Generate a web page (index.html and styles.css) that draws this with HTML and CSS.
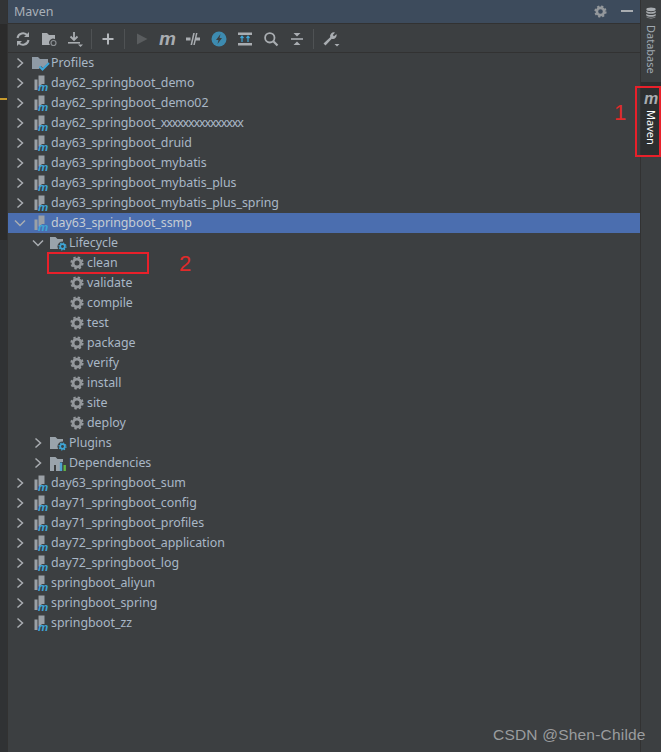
FILE: index.html
```html
<!DOCTYPE html>
<html lang="en">
<head>
<meta charset="utf-8">
<title>Maven</title>
<link rel="stylesheet" href="styles.css">
</head>
<body>
<svg class="defs" width="0" height="0">
  <defs>
    <symbol id="chev" viewBox="0 0 10 12"><path d="M2.500 1.500 7.500 6l-5 4.500" fill="none" stroke="#a9adb1" stroke-width="1.500"/></symbol>
    <symbol id="down" viewBox="0 0 12 10"><path d="M1 2.500 6 7.500l5-5" fill="none" stroke="#a9adb1" stroke-width="1.500"/></symbol>
    <symbol id="mod" viewBox="0 0 16 16">
      <path d="M5.500 .5h6v8.500H8.500v2.500h-3zM1.500 4.500h3v10.500h-3z" fill="#9aa0a6"/>
      <text x="5" y="15.800" class="mod-m">m</text>
    </symbol>
    <symbol id="gear" viewBox="0 0 14 14">
      <circle cx="7" cy="7" r="3.900" fill="none" stroke="#94989c" stroke-width="2.800"/>
      <circle cx="7" cy="7" r="5.700" fill="none" stroke="#94989c" stroke-width="1.800" stroke-dasharray="2.400 2.080"/>
    </symbol>
    <symbol id="badge" viewBox="0 0 18 15">
      <path d="M0 1h5.500l2 2H13v10H0z" fill="#9aa3ab"/>
      <circle cx="12.500" cy="10.500" r="5" fill="#3c3f41"/>
      <circle cx="12.500" cy="10.500" r="2.300" fill="none" stroke="#3ea6d8" stroke-width="1.700"/>
      <circle cx="12.500" cy="10.500" r="3.500" fill="none" stroke="#3ea6d8" stroke-width="1.200" stroke-dasharray="1.300 1.450"/>
    </symbol>
  </defs>
</svg>
<div class="ide">
  <div class="gutter"><span class="gutter-mark"></span></div>
  <main class="panel">
    <header class="title-bar">
      <span class="title">Maven</span>
      <div class="title-actions">
        <svg class="ico" width="13" height="13"><use href="#gear"/></svg>
        <span class="minimize"></span>
      </div>
    </header>
    <div class="toolbar">
      <svg class="tool" width="16" height="16" viewBox="0 0 16 16"><path d="M2.500 7a5.600 5.600 0 0 1 10-2.500M13.500 9a5.600 5.600 0 0 1-10 2.500" fill="none" stroke="#a9adb1" stroke-width="2"/><path d="M14 1v5H9zM2 15v-5h5z" fill="#a9adb1"/></svg>
      <svg class="tool" width="16" height="16" viewBox="0 0 16 16"><path d="M1 2h5l2 2h6v4a4 4 0 0 0-5 6H1z" fill="#a9adb1"/><circle cx="12.500" cy="12" r="2.500" fill="none" stroke="#8a8e92" stroke-width="1.200"/></svg>
      <svg class="tool" width="16" height="16" viewBox="0 0 16 16"><path d="M7 1v7M3.500 5.500 7 9l3.500-3.500" fill="none" stroke="#a9adb1" stroke-width="1.800"/><path d="M1 11h12v1.600H1z" fill="#a9adb1"/><path d="M11 13.500h5L13.500 16z" fill="#a9adb1"/></svg>
      <span class="sep"></span>
      <svg class="tool" width="16" height="16" viewBox="0 0 16 16"><path d="M7 2.500h2V7h4.500v2H9v4.500H7V9H2.500V7H7z" fill="#b4b8bc"/></svg>
      <span class="sep"></span>
      <svg class="tool" width="16" height="16" viewBox="0 0 16 16"><path d="M4 2.500 14.500 8 4 13.500z" fill="#5a5d5f"/></svg>
      <span class="tool m-glyph">m</span>
      <svg class="tool" width="16" height="16" viewBox="0 0 16 16"><path d="M1 6.500h4.500v3H1zM10 6.500h5v3h-5z" fill="#a9adb1"/><path d="M8.200 2 5.500 14h1.600L9.800 2z" fill="#a9adb1"/><path d="M11 2 8.300 14h1.500L12.500 2z" fill="#a9adb1"/></svg>
      <svg class="tool" width="16" height="16" viewBox="0 0 16 16"><circle cx="8" cy="8" r="7.500" fill="#3d8bb0"/><path d="M9.500 3 5 9h2.500L6.500 13 11 7H8.500z" fill="#3c3f41"/></svg>
      <svg class="tool" width="16" height="16" viewBox="0 0 16 16"><path d="M1 1.500h14v2.500H1zM1 12h14v2.500H1z" fill="#a9adb1"/><path d="M5 11V5.500M3.500 7 5 5.200 6.500 7M11 11V5.500M9.500 7 11 5.200 12.500 7" fill="none" stroke="#3ea6d8" stroke-width="1.200"/></svg>
      <svg class="tool" width="16" height="16" viewBox="0 0 16 16"><circle cx="6.800" cy="6.800" r="4.700" fill="none" stroke="#a9adb1" stroke-width="1.800"/><path d="m10.300 10.300 4.200 4.200" stroke="#a9adb1" stroke-width="2.200"/></svg>
      <svg class="tool" width="16" height="16" viewBox="0 0 16 16"><path d="M2 7.200h12v1.600H2z" fill="#a9adb1"/><path d="M4.500 2h7L8 5.600zM8 10.400 11.500 14h-7z" fill="#a9adb1"/></svg>
      <span class="sep"></span>
      <svg class="tool" width="18" height="16" viewBox="0 0 18 16"><path d="M13 1.500a3.800 3.800 0 0 0-4.800 4.700L1.500 12.500l2 2 6.300-6.700A3.800 3.800 0 0 0 14.500 3L12 5.300 10.800 4z" fill="#a9adb1"/><path d="M12.500 13h5L15 15.500z" fill="#a9adb1"/></svg>
    </div>
    <ul class="tree">
      <li class="row l0"><svg class="arrow" width="10" height="12"><use href="#chev"/></svg><svg class="node" width="18" height="15" viewBox="0 0 18 15"><path d="M0 1h6l2 2h8v4l-5 5-2-2-2 3H0z" fill="#8f9aa5"/><path d="m7.500 10.500 3 3 6.500-6.500" fill="none" stroke="#3ea6d8" stroke-width="2"/></svg><span class="label">Profiles</span></li>
      <li class="row l0"><svg class="arrow" width="10" height="12"><use href="#chev"/></svg><svg class="node" width="16" height="16"><use href="#mod"/></svg><span class="label">day62_springboot_demo</span></li>
      <li class="row l0"><svg class="arrow" width="10" height="12"><use href="#chev"/></svg><svg class="node" width="16" height="16"><use href="#mod"/></svg><span class="label">day62_springboot_demo02</span></li>
      <li class="row l0"><svg class="arrow" width="10" height="12"><use href="#chev"/></svg><svg class="node" width="16" height="16"><use href="#mod"/></svg><span class="label">day62_springboot_<span class="squeeze">xxxxxxxxxxxxxxx</span></span></li>
      <li class="row l0"><svg class="arrow" width="10" height="12"><use href="#chev"/></svg><svg class="node" width="16" height="16"><use href="#mod"/></svg><span class="label">day63_springboot_druid</span></li>
      <li class="row l0"><svg class="arrow" width="10" height="12"><use href="#chev"/></svg><svg class="node" width="16" height="16"><use href="#mod"/></svg><span class="label">day63_springboot_mybatis</span></li>
      <li class="row l0"><svg class="arrow" width="10" height="12"><use href="#chev"/></svg><svg class="node" width="16" height="16"><use href="#mod"/></svg><span class="label">day63_springboot_mybatis_plus</span></li>
      <li class="row l0"><svg class="arrow" width="10" height="12"><use href="#chev"/></svg><svg class="node" width="16" height="16"><use href="#mod"/></svg><span class="label">day63_springboot_mybatis_plus_spring</span></li>
      <li class="row l0 selected"><svg class="arrow down" width="12" height="10"><use href="#down"/></svg><svg class="node" width="16" height="16"><use href="#mod"/></svg><span class="label">day63_springboot_ssmp</span></li>
      <li class="row l1"><svg class="arrow down" width="12" height="10"><use href="#down"/></svg><svg class="node" width="18" height="15"><use href="#badge"/></svg><span class="label">Lifecycle</span></li>
      <li class="row l2 boxed"><svg class="node" width="14" height="14"><use href="#gear"/></svg><span class="label">clean</span><span class="callout-box"></span><span class="callout-num two">2</span></li>
      <li class="row l2"><svg class="node" width="14" height="14"><use href="#gear"/></svg><span class="label">validate</span></li>
      <li class="row l2"><svg class="node" width="14" height="14"><use href="#gear"/></svg><span class="label">compile</span></li>
      <li class="row l2"><svg class="node" width="14" height="14"><use href="#gear"/></svg><span class="label">test</span></li>
      <li class="row l2"><svg class="node" width="14" height="14"><use href="#gear"/></svg><span class="label">package</span></li>
      <li class="row l2"><svg class="node" width="14" height="14"><use href="#gear"/></svg><span class="label">verify</span></li>
      <li class="row l2"><svg class="node" width="14" height="14"><use href="#gear"/></svg><span class="label">install</span></li>
      <li class="row l2"><svg class="node" width="14" height="14"><use href="#gear"/></svg><span class="label">site</span></li>
      <li class="row l2"><svg class="node" width="14" height="14"><use href="#gear"/></svg><span class="label">deploy</span></li>
      <li class="row l1"><svg class="arrow" width="10" height="12"><use href="#chev"/></svg><svg class="node" width="18" height="15"><use href="#badge"/></svg><span class="label">Plugins</span></li>
      <li class="row l1"><svg class="arrow" width="10" height="12"><use href="#chev"/></svg><svg class="node" width="18" height="15" viewBox="0 0 18 15"><path d="M0 1h5.500l2 2H13v3h-3v9H6v-6H4v6H0z" fill="#9aa3ab"/><path d="M6.500 10h2v5h-2z" fill="#9aa3ab"/><path d="M9.800 6.500h2.400V15H9.800z" fill="#4fa3d1"/><path d="M13.500 9h2.400v6h-2.400z" fill="#62b543"/></svg><span class="label">Dependencies</span></li>
      <li class="row l0"><svg class="arrow" width="10" height="12"><use href="#chev"/></svg><svg class="node" width="16" height="16"><use href="#mod"/></svg><span class="label">day63_springboot_sum</span></li>
      <li class="row l0"><svg class="arrow" width="10" height="12"><use href="#chev"/></svg><svg class="node" width="16" height="16"><use href="#mod"/></svg><span class="label">day71_springboot_config</span></li>
      <li class="row l0"><svg class="arrow" width="10" height="12"><use href="#chev"/></svg><svg class="node" width="16" height="16"><use href="#mod"/></svg><span class="label">day71_springboot_profiles</span></li>
      <li class="row l0"><svg class="arrow" width="10" height="12"><use href="#chev"/></svg><svg class="node" width="16" height="16"><use href="#mod"/></svg><span class="label">day72_springboot_application</span></li>
      <li class="row l0"><svg class="arrow" width="10" height="12"><use href="#chev"/></svg><svg class="node" width="16" height="16"><use href="#mod"/></svg><span class="label">day72_springboot_log</span></li>
      <li class="row l0"><svg class="arrow" width="10" height="12"><use href="#chev"/></svg><svg class="node" width="16" height="16"><use href="#mod"/></svg><span class="label">springboot_aliyun</span></li>
      <li class="row l0"><svg class="arrow" width="10" height="12"><use href="#chev"/></svg><svg class="node" width="16" height="16"><use href="#mod"/></svg><span class="label">springboot_spring</span></li>
      <li class="row l0"><svg class="arrow" width="10" height="12"><use href="#chev"/></svg><svg class="node" width="16" height="16"><use href="#mod"/></svg><span class="label">springboot_zz</span></li>
    </ul>
  </main>
  <aside class="rail">
    <div class="rail-tab">
      <svg width="12" height="14" viewBox="0 0 14 14"><ellipse cx="7" cy="2.700" rx="5.500" ry="2.200" fill="#a9adb1"/><path d="M1.500 4.500c1 2 10 2 11 0v2c-1 2-10 2-11 0zM1.500 7.800c1 2 10 2 11 0v2c-1 2-10 2-11 0zM1.500 11c1 2 10 2 11 0v.5c-1 2.500-10 2.500-11 0z" fill="#a9adb1"/></svg>
      <span class="rail-text">Database</span>
    </div>
    <div class="rail-tab active">
      <span class="m-glyph rail-m">m</span>
      <span class="rail-text">Maven</span>
      <span class="callout-rail"></span>
      <span class="callout-num one">1</span>
    </div>
  </aside>
</div>
<span class="watermark">CSDN @Shen-Childe</span>
</body>
</html>
```

FILE: styles.css
```css
* { box-sizing: border-box; }
html, body { margin: 0; height: 100%; }
body { background: #3c3f41; font-family: "Noto Sans", "Liberation Sans", sans-serif; overflow: hidden; position: relative; }
.defs { position: absolute; }
.ide { display: flex; width: 661px; height: 752px; }
.gutter { width: 8px; background: linear-gradient(#323436 0 24px, #2b2b2b 24px 240px, #303234 240px); position: relative; border-right: 1px solid #323232; }
.gutter-mark { position: absolute; left: 0; top: 98px; width: 7px; height: 2px; background: #c79a2c; }
.panel { flex: 1; display: flex; flex-direction: column; min-width: 0; }
.title-bar { height: 24px; background: #3d4b5c; border-bottom: 1px solid #323232; display: flex; align-items: center; justify-content: space-between; padding: 0 7px 1px 6px; }
.title { font-size: 12.500px; color: #a9b0b8; }
.title-actions { display: flex; align-items: center; gap: 14px; }
.ico { display: block; }
.minimize { width: 12px; height: 2px; background: #a9adb1; }
.toolbar { height: 29px; border-bottom: 1px solid #323232; display: flex; align-items: center; gap: 10px; padding: 2px 0 0 7px; }
.tool { display: block; flex: none; }
.sep { width: 1px; height: 20px; background: #4f5254; flex: none; margin: 0 -2px; }
.m-glyph { font-family: "Liberation Sans", sans-serif; font-weight: 700; font-style: italic; font-size: 19px; line-height: 16px; color: #a9adb1; width: 16px; text-align: center; }
.tree { list-style: none; margin: 0; padding: 0; }
.row { height: 20px; display: flex; align-items: center; position: relative; font-size: 12.400px; letter-spacing: -.03px; color: #a9b7c6; white-space: nowrap; }
.row.selected { background: #4b6eaf; color: #c5ccd4; }
.arrow { flex: none; margin-right: 7px; }
.arrow.down { margin-left: -1px; margin-right: 6px; }
.l0 { padding-left: 7px; }
.l1 { padding-left: 25px; }
.l2 { padding-left: 62px; }
.node { flex: none; display: block; }
.l0 .node { margin-right: 2px; margin-left: 1px; }
.l0:first-child .node { margin-left: 0; margin-right: 1px; }
.l1 .node { margin-right: 1px; }
.l2 .node { margin-right: 3px; }
.label { line-height: 20px; }
.squeeze { letter-spacing: -1.100px; }
.mod-m { font-family: "Liberation Sans", sans-serif; font-weight: 700; font-style: italic; font-size: 11.500px; fill: #3ea6d8; }
.callout-box { position: absolute; left: 39px; top: -1px; width: 102px; height: 22px; border: 2px solid #e8202a; }
.callout-num { position: absolute; color: #e02a2a; font-size: 22px; line-height: 24px; font-family: "Liberation Sans", sans-serif; }
.callout-num.two { left: 171px; top: -1px; }
.callout-num.one { left: -27px; top: 19px; }
.rail { width: 21px; border-left: 1px solid #323232; display: flex; flex-direction: column; flex: none; }
.rail-tab { height: 82px; display: flex; flex-direction: column; align-items: center; gap: 5px; padding-top: 6px; position: relative; }
.rail-text { writing-mode: vertical-rl; font-size: 11px; color: #a0a9b2; }
.rail-tab.active { background: #2d2f30; height: 75px; padding-top: 10px; gap: 5px; }
.rail-tab.active .rail-text { color: #fff; }
.rail-m { font-size: 16px; width: 16px; line-height: 13px; }
.callout-rail { position: absolute; left: -6px; top: 4px; width: 26px; height: 71px; border: 2px solid #e8202a; }
.watermark { position: absolute; left: 493px; top: 726px; font-size: 15.500px; font-family: "Liberation Sans", sans-serif; color: #9a9c9e; letter-spacing: .2px; }
```
